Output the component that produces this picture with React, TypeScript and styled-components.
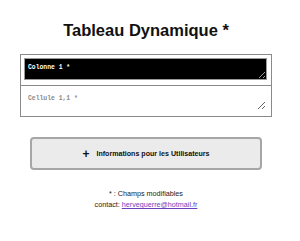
import React from "react";
import styled, { createGlobalStyle } from "styled-components";

const Global = createGlobalStyle`
  html, body { margin: 0; padding: 0; background: #fff; }
  body { font-family: "Liberation Sans", Arial, sans-serif; }
`;

const Page = styled.div`
  width: 292px;
  display: flex;
  flex-direction: column;
  align-items: center;
  padding-top: 20px;
`;

const Title = styled.h1`
  margin: 0;
  font-size: 16.5px;
  font-weight: bold;
  color: #111;
  line-height: 20px;
`;

const Grid = styled.table`
  margin-top: 14px;
  width: 252px;
  border-collapse: collapse;
  border: 1px solid #8a8a8a;
`;

const Cell = styled.td`
  border: 1px solid #8a8a8a;
  padding: 3px 4px 5px 3px;
`;

const Field = styled.textarea<{ $dark?: boolean }>`
  display: block;
  box-sizing: border-box;
  width: 100%;
  height: 22px;
  margin: 0;
  padding: 5px 3px 2px;
  font-family: "Liberation Mono", monospace;
  font-size: 6.4px;
  font-weight: bold;
  background: ${(p) => (p.$dark ? "#000" : "#fff")};
  color: ${(p) => (p.$dark ? "#fff" : "#333")};
  border: 1px solid ${(p) => (p.$dark ? "#9a9a9a" : "#fff")};
  outline: none;
  &::placeholder {
    color: ${(p) => (p.$dark ? "#fff" : "#8a8a8a")};
    opacity: 1;
  }
`;

const InfoButton = styled.button`
  margin-top: 20px;
  width: 232px;
  height: 33px;
  box-sizing: border-box;
  background: #ebebeb;
  border: 2px solid #a6a6a6;
  border-radius: 4px;
  display: flex;
  align-items: center;
  justify-content: center;
  gap: 7px;
  font-family: "Liberation Sans", Arial, sans-serif;
  font-weight: bold;
  font-size: 7.1px;
  color: #111;
  padding: 0;
`;

const Plus = styled.span`
  font-size: 12px;
  line-height: 1;
  font-weight: bold;
`;

const Footer = styled.div`
  margin-top: 18px;
  font-size: 7.2px;
  line-height: 11px;
  color: #222;
  text-align: center;
`;

const Mail = styled.a`
  color: #6b3fbf;
  text-decoration: underline;
`;

export default function App() {
  return (
    <>
      <Global />
      <Page>
        <Title>Tableau Dynamique *</Title>
        <Grid>
          <tbody>
            <tr>
              <Cell>
                <Field $dark defaultValue="Colonne 1 *" />
              </Cell>
            </tr>
            <tr>
              <Cell>
                <Field placeholder="Cellule 1,1 *" />
              </Cell>
            </tr>
          </tbody>
        </Grid>
        <InfoButton>
          <Plus>+</Plus>
          <span>Informations pour les Utilisateurs</span>
        </InfoButton>
        <Footer>
          <div>* : Champs modifiables</div>
          <div>
            contact: <Mail href="#">herveguerre@hotmail.fr</Mail>
          </div>
        </Footer>
      </Page>
    </>
  );
}
